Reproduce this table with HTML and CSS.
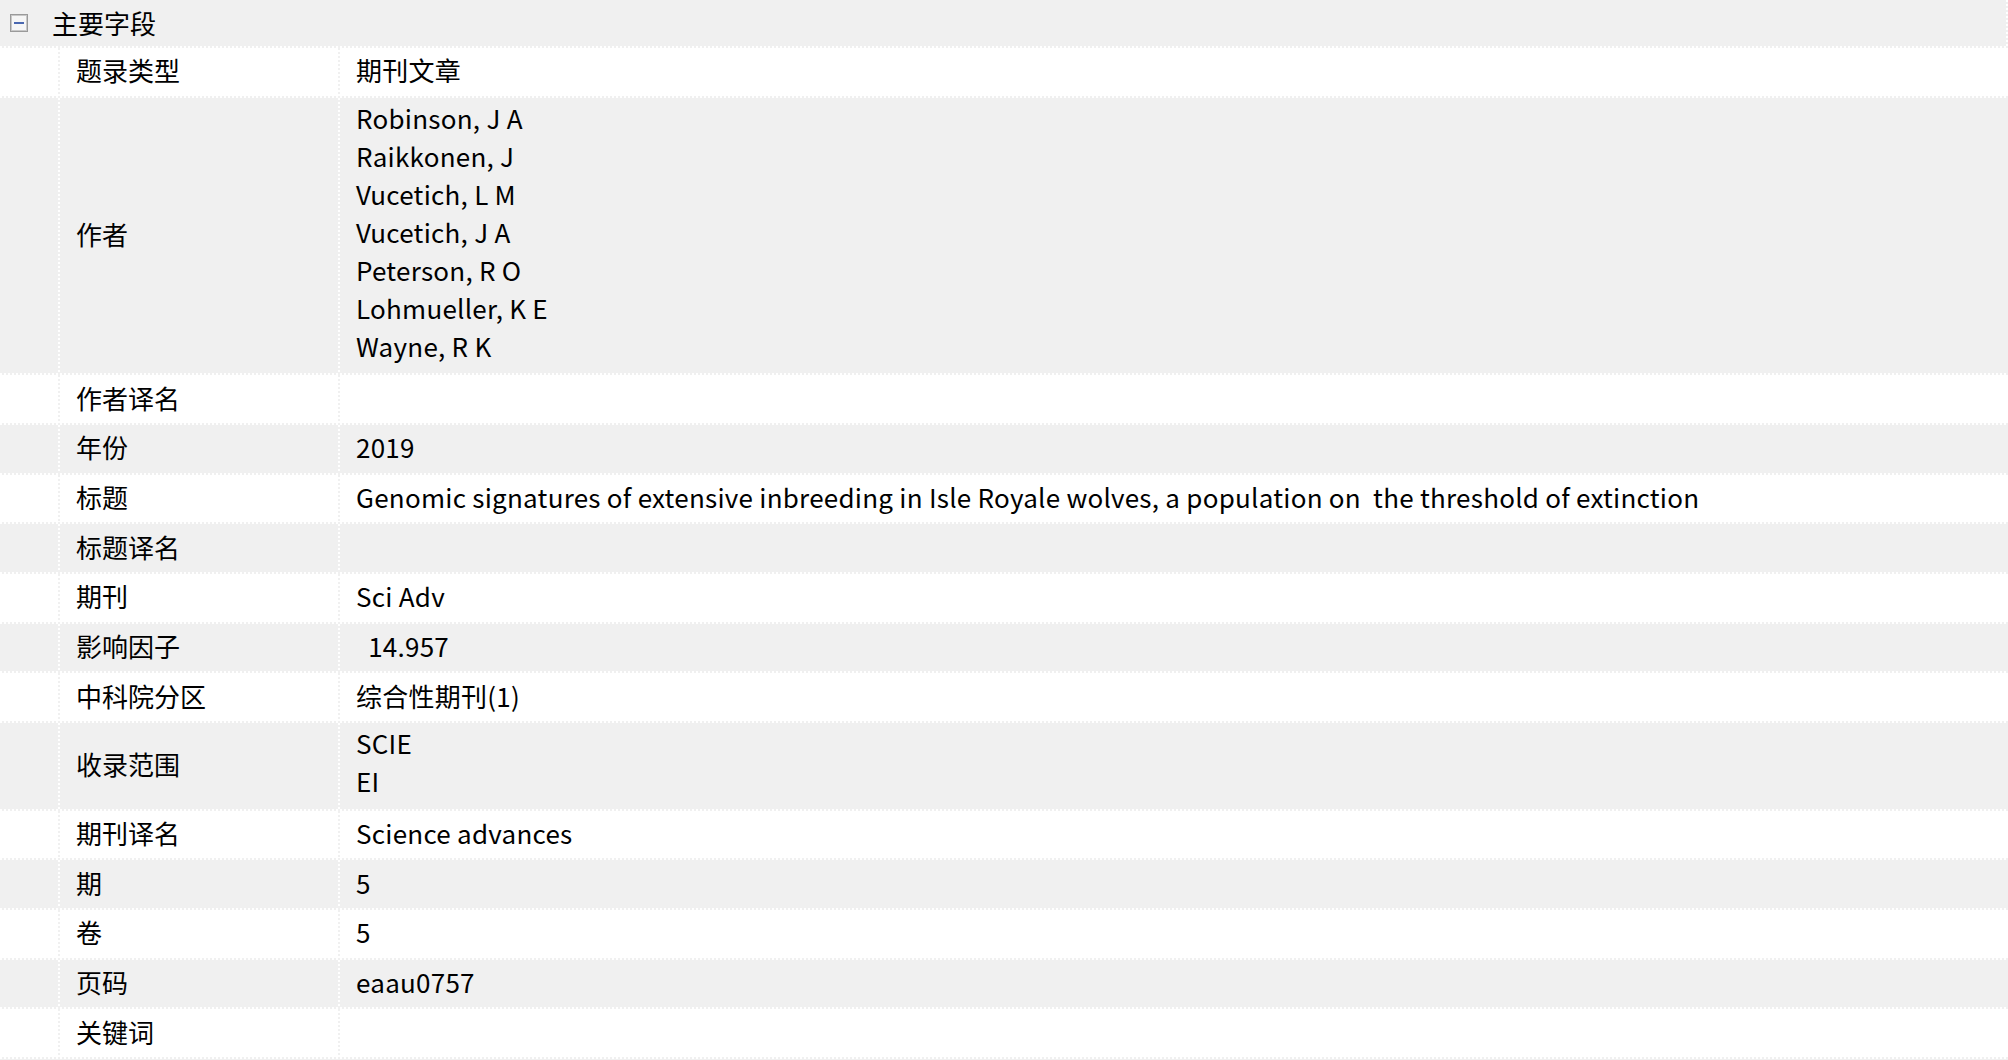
FILE: index.html
```html
<!DOCTYPE html>
<html lang="zh-CN">
<head>
  <meta charset="UTF-8">
  <title>主要字段</title>
  <link rel="stylesheet" href="styles.css">
</head>
<body>
  <div class="grid">
    <!-- group header -->
    <div class="group-head">
      <svg class="toggle" width="18" height="18" viewBox="0 0 18 18">
        <rect x="0.5" y="0.5" width="17" height="17" fill="#f6f6f6" stroke="#9a9a9a"/>
        <rect x="1.5" y="1.5" width="15" height="15" fill="none" stroke="#c8c8c8"/>
        <rect x="4" y="8" width="10" height="2" fill="#4a68b0"/>
      </svg>
      <span>主要字段</span>
    </div>

    <div class="row"><div class="gutter"></div><div class="label">题录类型</div><div class="value">期刊文章</div></div>
    <div class="row alt">
      <div class="gutter"></div>
      <div class="label">作者</div>
      <div class="value">
        <div>Robinson, J A</div>
        <div>Raikkonen, J</div>
        <div>Vucetich, L M</div>
        <div>Vucetich, J A</div>
        <div>Peterson, R O</div>
        <div>Lohmueller, K E</div>
        <div>Wayne, R K</div>
      </div>
    </div>
    <div class="row"><div class="gutter"></div><div class="label">作者译名</div><div class="value"></div></div>
    <div class="row alt"><div class="gutter"></div><div class="label">年份</div><div class="value">2019</div></div>
    <div class="row"><div class="gutter"></div><div class="label">标题</div><div class="value">Genomic signatures of extensive inbreeding in Isle Royale wolves, a population on  the threshold of extinction</div></div>
    <div class="row alt"><div class="gutter"></div><div class="label">标题译名</div><div class="value"></div></div>
    <div class="row"><div class="gutter"></div><div class="label">期刊</div><div class="value">Sci Adv</div></div>
    <div class="row alt"><div class="gutter"></div><div class="label">影响因子</div><div class="value">  14.957</div></div>
    <div class="row"><div class="gutter"></div><div class="label">中科院分区</div><div class="value">综合性期刊(1)</div></div>
    <div class="row alt">
      <div class="gutter"></div>
      <div class="label">收录范围</div>
      <div class="value">
        <div>SCIE</div>
        <div>EI</div>
      </div>
    </div>
    <div class="row"><div class="gutter"></div><div class="label">期刊译名</div><div class="value">Science advances</div></div>
    <div class="row alt"><div class="gutter"></div><div class="label">期</div><div class="value">5</div></div>
    <div class="row"><div class="gutter"></div><div class="label">卷</div><div class="value">5</div></div>
    <div class="row alt"><div class="gutter"></div><div class="label">页码</div><div class="value">eaau0757</div></div>
    <div class="row"><div class="gutter"></div><div class="label">关键词</div><div class="value"></div></div>
  </div>
</body>
</html>
```

FILE: styles.css
```css
body {
  margin: 0;
  background: #f0f0f0;
  font-family: "Noto Sans CJK SC", sans-serif;
  font-size: 26px;
  color: #000;
  overflow: hidden;
}

.grid {
  width: 100%;
}

.group-head {
  display: flex;
  align-items: center;
  height: 46px;
  padding: 0 0 2px 10px;
  background:
    repeating-linear-gradient(90deg, #fff 0 2px, #f0f0f0 2px 4px) bottom / 100% 2px no-repeat,
    repeating-linear-gradient(180deg, #fff 0 2px, #f0f0f0 2px 4px) right top / 2px 46px no-repeat,
    #f0f0f0;
}

.toggle {
  display: block;
  margin-right: 24px;
}

.group-head span {
  line-height: 46px;
}

.row {
  display: grid;
  grid-template-columns: 58px 280px 1fr;
  padding-bottom: 2px;
  background:
    repeating-linear-gradient(90deg, #fff 0 2px, #f0f0f0 2px 4px) bottom / 100% 2px no-repeat,
    #fff;
}

.row.alt {
  background:
    repeating-linear-gradient(90deg, #fff 0 2px, #f0f0f0 2px 4px) bottom / 100% 2px no-repeat,
    #f0f0f0;
}

.label, .value {
  padding: 3.33px 0 6.33px 18px;
  line-height: 38px;
  white-space: pre;
  background: repeating-linear-gradient(180deg, #f0f0f0 0 2px, #fff 2px 4px) left top / 2px 100% no-repeat;
}

.alt .label, .alt .value {
  background: repeating-linear-gradient(180deg, #fff 0 2px, #f0f0f0 2px 4px) left top / 2px 100% no-repeat;
}

.label {
  display: flex;
  align-items: center;
}

.value {
  display: flex;
  flex-direction: column;
  justify-content: center;
  letter-spacing: 0.25px;
}

.value div:first-child {
  margin-top: -2px;
}

.value div:last-child {
  margin-bottom: 2px;
}
```
